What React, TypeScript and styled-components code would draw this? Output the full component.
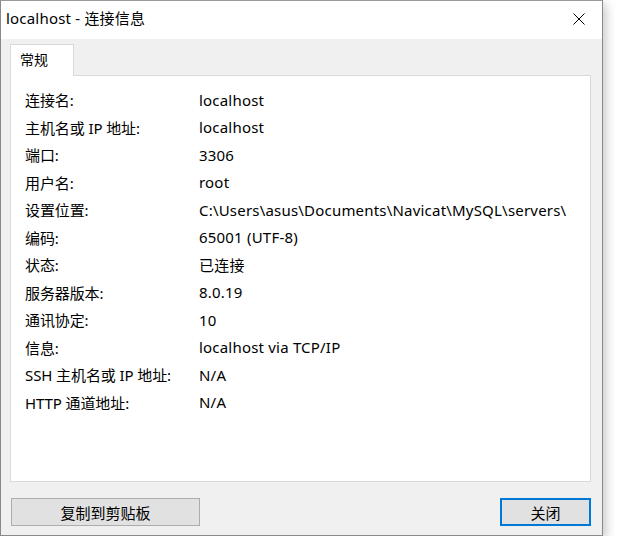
import styled, { createGlobalStyle } from 'styled-components';

const GlobalStyle = createGlobalStyle`
  html, body {
    margin: 0;
    padding: 0;
    background: #ffffff;
  }
  body {
    font-family: "Noto Sans", "Noto Sans CJK SC", sans-serif;
    color: #000;
  }
`;

const Window = styled.div`
  width: 603px;
  height: 536px;
  border: 1px solid #8a8a8a;
  border-top-color: #9a9a9a;
  background: #f0f0f0;
  box-shadow: 3px 4px 10px rgba(0, 0, 0, 0.22);
  display: flex;
  flex-direction: column;
  box-sizing: border-box;
`;

const TitleBar = styled.div`
  height: 39px;
  background: #ffffff;
  display: flex;
  align-items: center;
  justify-content: space-between;
  padding-left: 5px;
`;

const Title = styled.div`
  font-size: 15px;
  letter-spacing: 0.2px;
  margin-top: -5px;
`;

const CloseBox = styled.div`
  width: 46px;
  height: 39px;
  display: flex;
  align-items: center;
  justify-content: center;
  margin-top: -3px;
`;

const Body = styled.div`
  flex: 1;
  display: flex;
  flex-direction: column;
  padding: 5px 11px 9px 9px;
`;

const TabStrip = styled.div`
  display: flex;
  height: 31px;
  position: relative;
  z-index: 1;
`;

const Tab = styled.div`
  width: 64px;
  background: #ffffff;
  border: 1px solid #d9d9d9;
  border-bottom: none;
  font-size: 14px;
  padding: 4px 0 0 9px;
  box-sizing: border-box;
  height: 32px;
`;

const Panel = styled.div`
  height: 407px;
  background: #ffffff;
  border: 1px solid #d9d9d9;
  box-sizing: border-box;
  padding: 10px 20px 0 14px;
  overflow: hidden;
`;

const InfoGrid = styled.div`
  display: grid;
  grid-template-columns: 174px 1fr;
  grid-auto-rows: 27.5px;
  align-items: center;
  font-size: 15px;
`;

const Label = styled.div`
  white-space: nowrap;
  letter-spacing: -0.1px;
`;

const Value = styled.div`
  white-space: nowrap;
  overflow: hidden;
  min-width: 0;
  letter-spacing: 0.2px;
`;

const Footer = styled.div`
  display: flex;
  justify-content: space-between;
  align-items: center;
  margin-top: 16px;
  padding-left: 1px;
`;

const Button = styled.button<{ $primary?: boolean; $w: number }>`
  width: ${(p) => p.$w}px;
  height: 28px;
  background: #e1e1e1;
  border: ${(p) => (p.$primary ? '2px solid #0078d7' : '1px solid #adadad')};
  font-family: "Noto Sans", "Noto Sans CJK SC", sans-serif;
  font-size: 15px;
  color: #000;
  padding: 0;
  display: flex;
  align-items: center;
  justify-content: center;
`;

const rows: [string, string][] = [
  ['连接名:', 'localhost'],
  ['主机名或 IP 地址:', 'localhost'],
  ['端口:', '3306'],
  ['用户名:', 'root'],
  ['设置位置:', 'C:\\Users\\asus\\Documents\\Navicat\\MySQL\\servers\\'],
  ['编码:', '65001 (UTF-8)'],
  ['状态:', '已连接'],
  ['服务器版本:', '8.0.19'],
  ['通讯协定:', '10'],
  ['信息:', 'localhost via TCP/IP'],
  ['SSH 主机名或 IP 地址:', 'N/A'],
  ['HTTP 通道地址:', 'N/A'],
];

function App() {
  return (
    <>
      <GlobalStyle />
      <Window>
        <TitleBar>
          <Title>localhost - 连接信息</Title>
          <CloseBox>
            <svg width="12" height="12" viewBox="0 0 12 12">
              <path d="M0.5 0.5 L11.5 11.5 M11.5 0.5 L0.5 11.5" stroke="#000" strokeWidth="1" />
            </svg>
          </CloseBox>
        </TitleBar>
        <Body>
          <TabStrip>
            <Tab>常规</Tab>
          </TabStrip>
          <Panel>
            <InfoGrid>
              {rows.map(([k, v]) => [
                <Label key={k + '-l'}>{k}</Label>,
                <Value key={k + '-v'}>{v}</Value>,
              ])}
            </InfoGrid>
          </Panel>
          <Footer>
            <Button $w={189}>复制到剪贴板</Button>
            <Button $w={91} $primary>
              关闭
            </Button>
          </Footer>
        </Body>
      </Window>
    </>
  );
}

export default App;
